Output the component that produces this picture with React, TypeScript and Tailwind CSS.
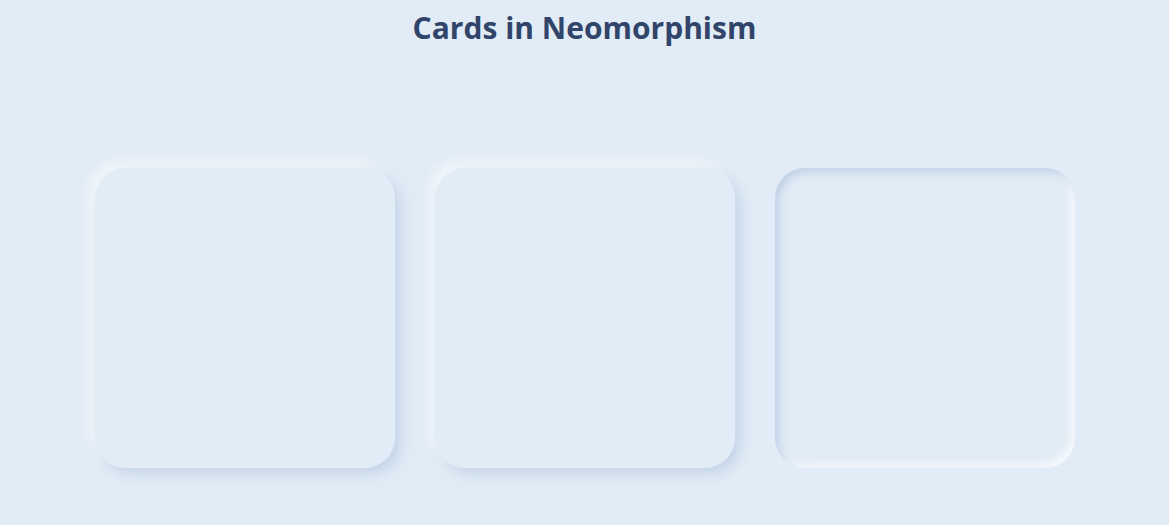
const Card = ({ inset }: { inset?: boolean }) => {
  return (
    <div
      className={
        inset
          ? "w-[300px] h-[300px] rounded-[30px] bg-[#e2ecf6] shadow-[inset_5px_5px_9px_-1px_rgba(176,198,224,0.7),inset_-5px_-5px_9px_-1px_rgba(255,255,255,0.7)]"
          : "w-[300px] h-[300px] rounded-[30px] bg-[#e2ecf6] shadow-[6px_6px_14px_-1px_rgba(170,194,222,0.6),-6px_-6px_14px_-1px_rgba(255,255,255,0.65)]"
      }
    />
  );
};

export default function App() {
  return (
    <div className="min-h-screen bg-[#e2ecf6] font-['Open_Sans',sans-serif]">
      <h1 className="pt-[9px] text-center text-[30px] leading-[38px] font-bold text-[#31456a]">
        Cards in Neomorphism
      </h1>
      <div className="mt-[121px] pl-[1px] flex justify-center gap-[40px]">
        <Card />
        <Card />
        <Card inset />
      </div>
    </div>
  );
}
